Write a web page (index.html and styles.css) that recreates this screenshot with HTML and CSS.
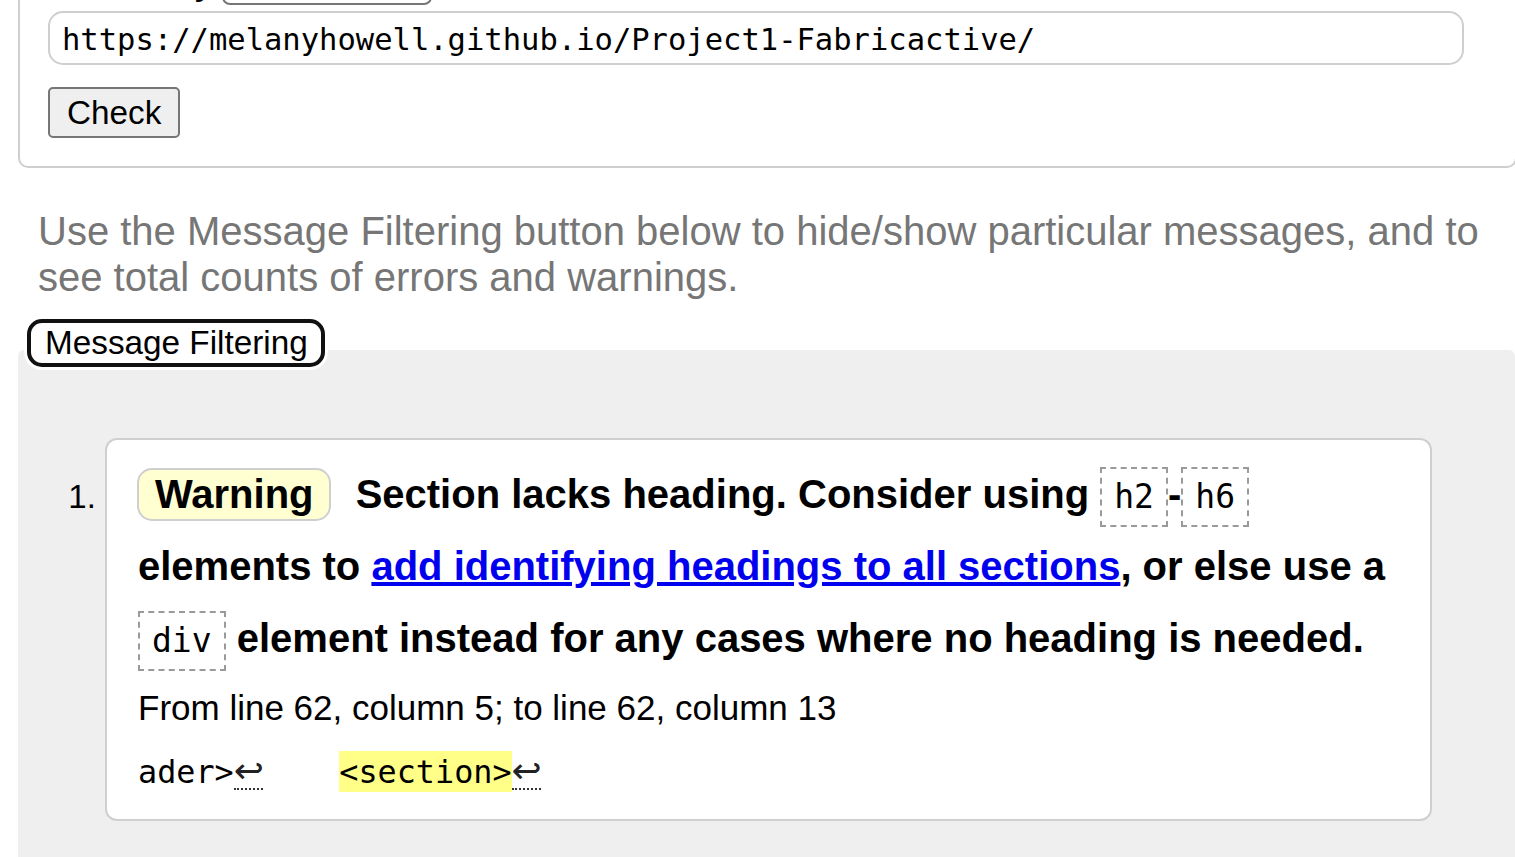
FILE: index.html
```html
<!DOCTYPE html>
<html>
<head>
<meta charset="utf-8">
<title>Nu Html Checker</title>
<link rel="stylesheet" href="styles.css">
</head>
<body>
<div class="page">
  <form class="checkform">
    <div class="byrow">
      <span class="bylabel">Check by</span>
      <span class="select"></span>
    </div>
    <input class="url" type="text" value="https://melanyhowell.github.io/Project1-Fabricactive/">
    <button class="check" type="button">Check</button>
  </form>

  <p class="hint">Use the Message Filtering button below to hide/show particular messages, and to see total counts of errors and warnings.</p>

  <div class="filterwrap"><button class="filter" type="button">Message Filtering</button></div>

  <div class="results">
    <ol class="messages">
      <li class="msg">
        <p class="msgtext"><strong class="badge">Warning</strong> <span>Section lacks heading. Consider using <code>h2</code>-<code>h6</code> elements to <a href="#">add identifying headings to all sections</a>, or else use a <code>div</code> element instead for any cases where no heading is needed.</span></p>
        <p class="location">From line 62, column 5; to line 62, column 13</p>
        <p class="extract">ader&gt;<b class="lf">↩</b>    <mark>&lt;section&gt;</mark><b class="lf">↩</b></p>
      </li>
    </ol>
  </div>
</div>
</body>
</html>
```

FILE: styles.css
```css
html, body {
  margin: 0;
  padding: 0;
  background: #fff;
  overflow: hidden;
}

body {
  font-family: "Liberation Sans", Arial, sans-serif;
  color: #000;
}

.page {
  margin-top: -67px;
  padding-left: 18px;
}

.checkform {
  margin-right: -2px;
  border: 2px solid #cfcfcf;
  border-radius: 10px;
  padding: 20px 0 28px 28px;
  display: flex;
  flex-direction: column;
  align-items: flex-start;
}

.byrow {
  display: flex;
  align-items: center;
  height: 50px;
  margin-bottom: 6px;
}

.bylabel {
  font-size: 40px;
  line-height: 46px;
}

.select {
  display: block;
  width: 206px;
  height: 46px;
  margin-left: 7px;
  border: 2px solid #767676;
  border-radius: 8px;
}

.url {
  box-sizing: border-box;
  width: 1416px;
  height: 54px;
  margin: 0;
  padding: 3px 12px 0;
  border: 2px solid #cfcfcf;
  border-radius: 15px;
  font-family: "DejaVu Sans Mono", "Liberation Mono", monospace;
  font-size: 30.5px;
  color: #000;
  background: #fff;
  outline: none;
}

.check {
  box-sizing: border-box;
  margin-top: 22px;
  height: 51px;
  padding: 0 17px;
  border: 2px solid #767676;
  border-radius: 5px;
  background: #efefef;
  font-family: "Liberation Sans", Arial, sans-serif;
  font-size: 33.3px;
  color: #000;
}

.hint {
  margin: 40px 0 0 20px;
  font-size: 40px;
  line-height: 46px;
  color: #767676;
}

.filterwrap {
  margin: 19px 0 -17px 9px;
  position: relative;
  z-index: 1;
  display: flex;
}

.filter {
  box-sizing: border-box;
  height: 48px;
  padding: 0 13px 0 14px;
  border: 4px solid #111;
  border-radius: 15px;
  background: #fff;
  box-shadow: 0 0 0 3px #fff;
  font-family: "Liberation Sans", Arial, sans-serif;
  font-size: 33.3px;
  line-height: 38px;
  color: #000;
}

.results {
  background: #efefef;
  border-radius: 6px 6px 0 0;
  min-height: 560px;
}

.messages {
  margin: 0;
  padding: 88px 83px 40px 87px;
}

.msg {
  background: #fff;
  border: 2px solid #cfcfcf;
  border-radius: 12px;
  padding: 18px 33px 27px 31px;
}

.msg::marker {
  font-family: "Liberation Sans", Arial, sans-serif;
  font-size: 33px;
}

.msgtext {
  margin: 0;
  font-size: 40px;
  font-weight: bold;
  line-height: 72px;
}

.badge {
  display: inline-block;
  margin-left: -1px;
  margin-right: 14px;
  padding: 0 15px 0 16px;
  border: 2px solid #cfcfcf;
  border-radius: 15px;
  background: #ffffd2;
  line-height: 49px;
}

code {
  display: inline-block;
  padding: 0 12px;
  border: 2px dashed #9a9a9a;
  font-family: "DejaVu Sans Mono", "Liberation Mono", monospace;
  font-size: 33px;
  font-weight: normal;
  line-height: 56px;
}

a {
  color: #0000ee;
  text-decoration: underline;
}

.location {
  margin: 14px 0 0;
  font-size: 35px;
  line-height: 40px;
}

.extract {
  margin: 23px 0 0;
  font-family: "DejaVu Sans Mono", "Liberation Mono", monospace;
  font-size: 31.8px;
  line-height: 41px;
  white-space: pre;
}

mark {
  display: inline-block;
  background: #ffff88;
  color: #000;
  line-height: 41px;
}

.lf {
  display: inline-block;
  width: 29px;
  font-weight: normal;
  font-family: "DejaVu Sans", sans-serif;
  font-size: 36px;
  line-height: 34px;
  text-align: center;
  color: #222;
  border-bottom: 2px dotted #333;
}
```
